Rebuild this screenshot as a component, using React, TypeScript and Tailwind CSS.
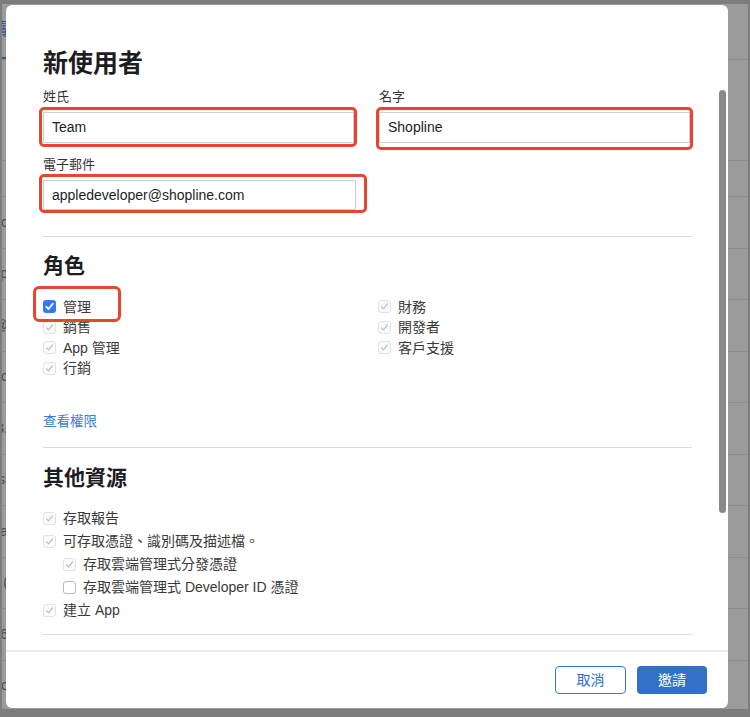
import React from "react";

type CbKind = "blue" | "disabled" | "empty";

function Check({ kind }: { kind: CbKind }) {
  if (kind === "blue") {
    return (
      <span className="flex h-[13px] w-[13px] shrink-0 items-center justify-center rounded-[3px] bg-[#3478f6]">
        <svg width="11" height="11" viewBox="0 0 11 11">
          <path d="M2.3 5.8 L4.5 8 L8.8 2.8" fill="none" stroke="#fff" strokeWidth="1.8" strokeLinecap="round" strokeLinejoin="round" />
        </svg>
      </span>
    );
  }
  if (kind === "empty") {
    return <span className="h-[13px] w-[13px] shrink-0 rounded-[3px] border border-[#b9b9b9] bg-white" />;
  }
  return (
    <span className="flex h-[13px] w-[13px] shrink-0 items-center justify-center rounded-[3px] border border-[#e2e2e2] bg-[#fbfbfb]">
      <svg width="11" height="11" viewBox="0 0 11 11">
        <path d="M2.5 5.8 L4.5 7.8 L8.5 2.8" fill="none" stroke="#bcbcbc" strokeWidth="1.2" strokeLinecap="round" strokeLinejoin="round" />
      </svg>
    </span>
  );
}

function Item({ kind, label, h = "h-[20.5px]", indent = false }: { kind: CbKind; label: string; h?: string; indent?: boolean }) {
  return (
    <div className={`flex items-center gap-[7px] ${h} ${indent ? "pl-[20px]" : ""}`}>
      <Check kind={kind} />
      <span className="text-[14px] leading-[16px] text-[#3a3a3a]">{label}</span>
    </div>
  );
}

const bgRows = ["c", "p", "@", "c", "3.", "sl", "na", ".(", "6", "nc"];

export default function App() {
  return (
    <div className="relative h-[717px] w-[750px] overflow-hidden border-b-[8px] border-l-2 border-r-2 border-t-4 border-[#7d7d7d] bg-[#9b9b9b] font-['Liberation_Sans','Noto_Sans_CJK_TC',sans-serif]">
      {/* dimmed page behind */}
      <div className="flex flex-col">
        <div className="flex h-[56px] items-end border-b border-[#8b8b8b]">
          <div className="-ml-[34px] flex h-[40px] w-[40px] items-start justify-end border-b-2 border-[#2f5d9e] text-[18px] leading-[22px] text-[#2f5d9e]">
            讀
          </div>
        </div>
        <div className="h-[101px] border-b border-[#8b8b8b]" />
        <div className="h-[36px] border-b border-[#8b8b8b]" />
        {bgRows.map((t, i) => (
          <div key={i} className="flex h-[51.5px] items-center border-b border-[#8b8b8b]">
            <div className="-ml-[30px] w-[36px] text-right text-[14px] text-[#4a4a4a]">{t}</div>
          </div>
        ))}
      </div>

      {/* modal */}
      <div className="absolute left-[4px] top-[1px] flex h-[703px] w-[722px] flex-col overflow-hidden rounded-[6px] bg-white">
        <div className="relative min-h-0 flex-1">
          <div className="pl-[37px] pr-[36px] pt-[43px]">
            <h1 className="text-[25px] font-bold leading-[30px] text-[#1d1d1f]">新使用者</h1>

            <div className="mt-[10.5px] grid grid-cols-2 items-start gap-x-[23px]">
              <div className="flex flex-col">
                <label className="text-[13px] leading-[16px] text-[#333]">姓氏</label>
                <div className="-ml-[4px] -mr-[1px] mt-[2.5px] rounded-[5px] border-[3px] border-[#e5462d] pb-px pl-px pr-[0px] pt-[2px]">
                  <div className="flex h-[31px] items-center border border-[#cfcfcf] bg-white pl-[8px] text-[14px] text-[#1d1d1f]">Team</div>
                </div>
              </div>
              <div className="flex flex-col">
                <label className="text-[13px] leading-[16px] text-[#333]">名字</label>
                <div className="-ml-[3px] -mr-[1px] mt-[2.5px] rounded-[5px] border-[3px] border-[#e5462d] pb-[4px] pt-[2px]">
                  <div className="flex h-[31px] items-center border border-[#cfcfcf] bg-white pl-[8px] text-[14px] text-[#1d1d1f]">Shopline</div>
                </div>
              </div>
            </div>

            <label className="mt-[6.5px] block text-[13px] leading-[16px] text-[#333]">電子郵件</label>
            <div className="-ml-[4px] mt-[1.5px] w-[328px] rounded-[5px] border-[3px] border-[#e5462d] pl-px pr-[8px] pt-[3px]">
              <div className="flex h-[30px] items-center border border-[#cfcfcf] bg-white pl-[8px] text-[14px] text-[#1d1d1f]">
                appledeveloper@shopline.com
              </div>
            </div>

            <div className="mt-[23px] h-px bg-[#dcdcdc]" />

            <h2 className="mt-[16px] text-[21px] font-bold leading-[25px] text-[#1d1d1f]">角色</h2>

            <div className="mt-[18.25px] grid grid-cols-2 gap-x-[23px]">
              <div className="flex flex-col">
                <div className="relative">
                  <Item kind="blue" label="管理" />
                  <div className="absolute -left-[10px] -top-[10.25px] h-[36px] w-[88px] rounded-[6px] border-[3px] border-[#e5462d]" />
                </div>
                <Item kind="disabled" label="銷售" />
                <Item kind="disabled" label="App 管理" />
                <Item kind="disabled" label="行銷" />
              </div>
              <div className="-ml-[1px] flex flex-col">
                <Item kind="disabled" label="財務" />
                <Item kind="disabled" label="開發者" />
                <Item kind="disabled" label="客戶支援" />
              </div>
            </div>

            <a className="mt-[35.75px] block text-[13.5px] leading-[16px] text-[#3b7bd4]">查看權限</a>

            <div className="mt-[17px] h-px bg-[#dcdcdc]" />

            <h2 className="mt-[17px] text-[21px] font-bold leading-[25px] text-[#1d1d1f]">其他資源</h2>

            <div className="mt-[16.5px] flex flex-col">
              <Item kind="disabled" label="存取報告" h="h-[23px]" />
              <Item kind="disabled" label="可存取憑證、識別碼及描述檔。" h="h-[23px]" />
              <Item kind="disabled" label="存取雲端管理式分發憑證" h="h-[23px]" indent />
              <Item kind="empty" label="存取雲端管理式 Developer ID 憑證" h="h-[23px]" indent />
              <Item kind="disabled" label="建立 App" h="h-[23px]" />
            </div>

            <div className="mt-[12.5px] h-px bg-[#dcdcdc]" />
          </div>

          <div className="absolute right-[2px] top-[85px] h-[423px] w-[7px] rounded-full bg-[#8a8a8a]" />
        </div>

        <div className="flex h-[58px] shrink-0 items-center justify-end gap-[11px] border-t-2 border-[#ececec] pr-[21px]">
          <button className="flex h-[28px] w-[71px] items-center justify-center rounded-[4px] border border-[#3a78d0] bg-white text-[14px] text-[#2f6fc6]">
            取消
          </button>
          <button className="flex h-[28px] w-[70px] items-center justify-center rounded-[4px] bg-[#3271c8] text-[14px] text-white">
            邀請
          </button>
        </div>
      </div>
    </div>
  );
}
